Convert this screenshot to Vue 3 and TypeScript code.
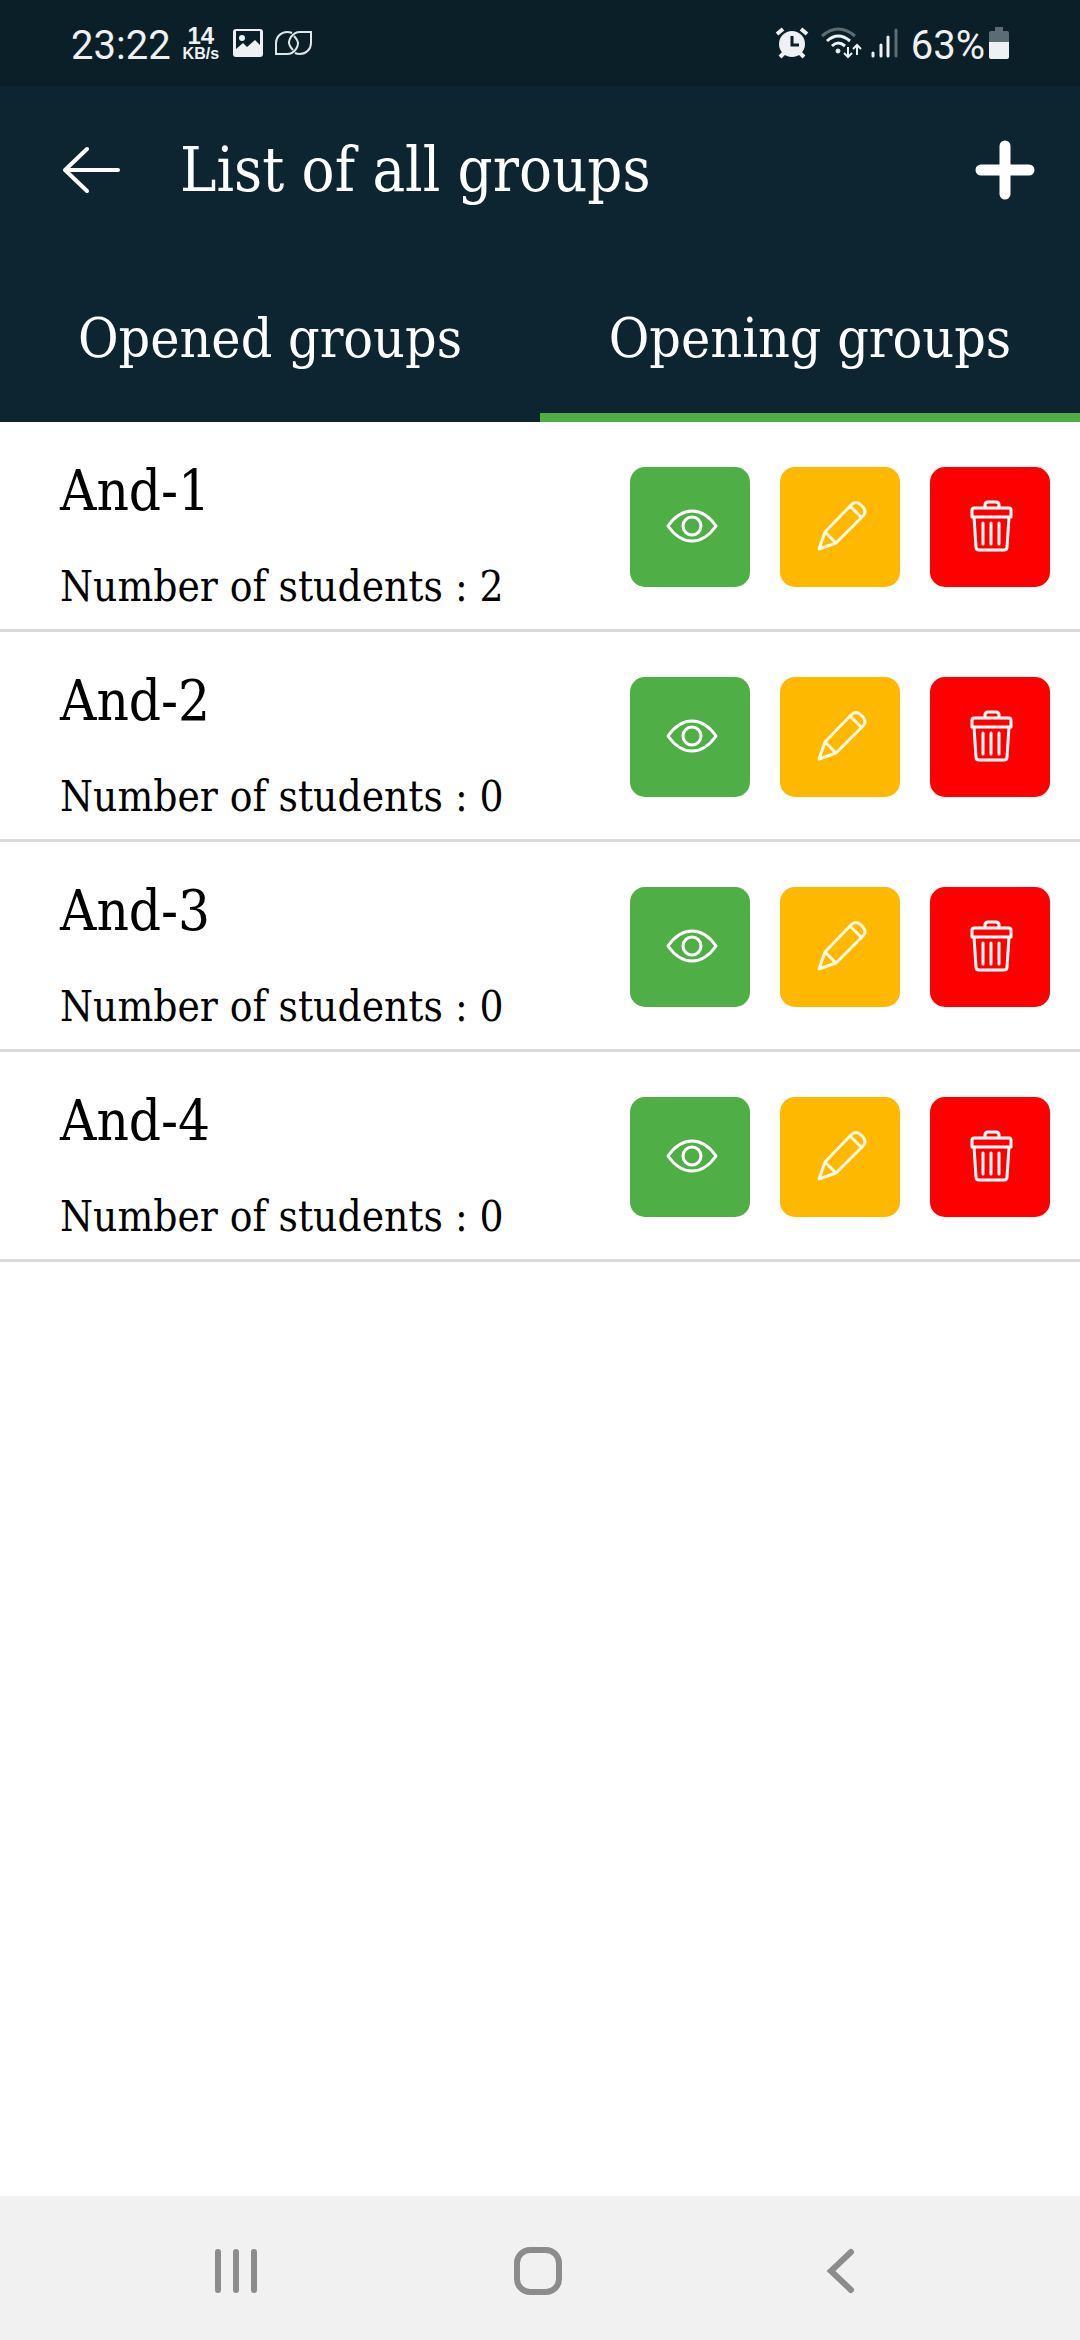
<script setup lang="ts">
import { ref } from 'vue'

interface Group {
  name: string
  students: number
}

const tabs = ['Opened groups', 'Opening groups']
const activeTab = ref(1)

const groups: Group[] = [
  { name: 'And-1', students: 2 },
  { name: 'And-2', students: 0 },
  { name: 'And-3', students: 0 },
  { name: 'And-4', students: 0 },
]
</script>

<template>
  <div class="screen">
    <div class="status">
      <div class="status-left">
        <span class="clock">23:22</span>
        <span class="speed"><b class="rate">14</b><b class="unit">KB/s</b></span>
        <svg class="picture" width="30" height="30" viewBox="0 0 30 30">
          <path
            fill="#eef1f3"
            fill-rule="evenodd"
            d="M3 1h24a3 3 0 0 1 3 3v22a3 3 0 0 1-3 3H3a3 3 0 0 1-3-3V4a3 3 0 0 1 3-3zM3 3v18l7-6 4 4 8-7 5 5V3z"
          />
          <circle cx="9" cy="10" r="3" fill="#eef1f3" />
        </svg>
        <svg width="37" height="24" viewBox="0 0 37 24" fill="none" stroke="#dfe5e8" stroke-width="2">
          <path d="M17 2Q15 1 12 1A11 11 0 0 0 1 12V23H12C20 23 25 14 22 9Q21 7 19 5" />
          <path d="M20 22Q22 23 25 23A11 11 0 0 0 36 12V1H25C17 1 12 10 15 15Q16 17 18 19" />
        </svg>
      </div>
      <div class="status-right">
        <svg width="34" height="32" viewBox="0 0 34 32">
          <circle cx="17" cy="17" r="13" fill="#eef1f3" />
          <path
            d="M2 7l6-5M32 7l-6-5M5 30l4-4M29 30l-4-4"
            stroke="#eef1f3"
            stroke-width="4"
          />
          <path d="M17 9v9h7" fill="none" stroke="#0a1f27" stroke-width="3" />
        </svg>
        <svg class="wifi" width="42" height="32" viewBox="0 0 42 32" fill="none" stroke="#eef1f3" stroke-width="3">
          <path d="M1 9Q17-5 34 9" stroke="#5d6c73" />
          <path d="M6 14Q17 4 29 14M11 19Q17 13 24 19" />
          <circle cx="17" cy="24" r="2" fill="#eef1f3" stroke-width="1" />
          <path d="M27 20v9M23 26l4 4 4-4M36 28v-9M32 22l4-4 4 4" stroke-width="2" />
        </svg>
        <svg class="signal" width="28" height="30" viewBox="0 0 28 30" stroke-width="3" stroke-linecap="round">
          <path d="M2 25v3M10 17v11M17 9v19" stroke="#eef1f3" />
          <path d="M25 2v26" stroke="#5d6c73" />
        </svg>
        <span class="clock">63%</span>
        <svg class="battery" width="20" height="32" viewBox="0 0 20 32">
          <path d="M6 0h8v4h4a2 2 0 0 1 2 2v9H0V6a2 2 0 0 1 2-2h4z" fill="#5d6c73" />
          <path d="M0 15h20v15a2 2 0 0 1-2 2H2a2 2 0 0 1-2-2z" fill="#eef1f3" />
        </svg>
      </div>
    </div>

    <header class="top">
      <div class="bar">
        <button class="plain" type="button" aria-label="Back">
          <svg width="60" height="60" viewBox="0 0 60 60" fill="none" stroke="#fff" stroke-width="4" stroke-linecap="round" stroke-linejoin="round">
            <path d="M58 30H6M27 9L5 30L27 51" />
          </svg>
        </button>
        <h1>List of all groups</h1>
        <button class="plain" type="button" aria-label="Add group">
          <svg width="60" height="60" viewBox="0 0 60 60" stroke="#fff" stroke-width="11" stroke-linecap="round">
            <path d="M30 6v48M6 30h48" />
          </svg>
        </button>
      </div>
      <nav class="tabs">
        <button
          v-for="(tab, i) in tabs"
          :key="tab"
          type="button"
          class="tab"
          :class="{ active: activeTab === i }"
          @click="activeTab = i"
        >
          {{ tab }}
        </button>
      </nav>
    </header>

    <main class="list">
      <section v-for="group in groups" :key="group.name" class="row">
        <div class="info">
          <h2>{{ group.name }}</h2>
          <p>Number of students : {{ group.students }}</p>
        </div>
        <div class="actions">
          <button class="action view" type="button" aria-label="View">
            <svg width="60" height="60" viewBox="0 0 60 60" fill="none" stroke="#fff" stroke-width="3" stroke-linejoin="round">
              <path d="M8 29C22 9 42 9 56 29C42 49 22 49 8 29Z" />
              <circle cx="32" cy="29" r="9" />
            </svg>
          </button>
          <button class="action edit" type="button" aria-label="Edit">
            <svg width="60" height="60" viewBox="0 0 60 60" fill="none" stroke="#fff9e6" stroke-width="3" stroke-linejoin="round">
              <path d="M9 52L15 35L41 8Q46 3 51 8L53 10Q57 15 53 19L26 46ZM15 35L26 46M40 9L51 20" />
            </svg>
          </button>
          <button class="action remove" type="button" aria-label="Delete">
            <svg width="60" height="60" viewBox="0 0 60 60" fill="none" stroke="#fff" stroke-width="3" stroke-linejoin="round" stroke-linecap="round">
              <path d="M14 11H49Q51 11 51 13V20H12V13Q12 11 14 11ZM25 11V8Q25 5 28 5H36Q39 5 39 8V11M14 20L16 50Q16 53 19 53H44Q47 53 47 50L49 20M23 26V47M31 26V47M39 26V47" />
            </svg>
          </button>
        </div>
      </section>
    </main>

    <footer class="navbar">
      <button class="plain" type="button" aria-label="Recent apps">
        <svg width="48" height="48" viewBox="0 0 48 48" stroke="#8c8c8c" stroke-width="6" stroke-linecap="round">
          <path d="M6 5v38M24 5v38M42 5v38" />
        </svg>
      </button>
      <button class="plain" type="button" aria-label="Home">
        <svg width="48" height="48" viewBox="0 0 48 48" fill="none" stroke="#8c8c8c" stroke-width="6">
          <rect x="3" y="3" width="42" height="42" rx="13" />
        </svg>
      </button>
      <button class="plain" type="button" aria-label="Go back">
        <svg width="48" height="48" viewBox="0 0 48 48" fill="none" stroke="#8c8c8c" stroke-width="6" stroke-linecap="round">
          <path d="M35 5L15 24L35 43" />
        </svg>
      </button>
    </footer>
  </div>
</template>

<style>
body {
  margin: 0;
  background: #fff;
}
</style>

<style scoped>
.screen {
  display: flex;
  flex-direction: column;
  min-height: 100vh;
  background: #fff;
  color: #000;
  font-family: 'Roboto Slab', 'DejaVu Serif Condensed', 'DejaVu Serif', serif;
}

svg {
  display: block;
  flex: none;
}

button {
  border: 0;
  padding: 0;
  color: inherit;
  font-family: inherit;
  cursor: pointer;
}

h1,
h2,
p {
  margin: 0;
  font-weight: 400;
}

.plain {
  background: none;
}

.status {
  display: flex;
  justify-content: space-between;
  align-items: center;
  height: 86px;
  padding: 0 71px;
  background: #0a1f27;
  color: #eef1f3;
  font-family: Roboto, sans-serif;
}

.status-left,
.status-right {
  display: flex;
  align-items: center;
}

.clock {
  font-size: 40px;
  line-height: 48px;
  padding-top: 5px;
}

.speed {
  display: flex;
  flex-direction: column;
  align-items: center;
  margin: 0 14px 0 12px;
  padding-top: 2px;
  font-family: 'Liberation Sans', sans-serif;
}

.rate {
  font-size: 24px;
  line-height: 20px;
}

.unit {
  font-size: 16px;
  line-height: 16px;
}

.picture {
  margin-right: 12px;
}

.wifi {
  margin: 0 8px 0 12px;
}

.signal {
  margin-right: 12px;
}

.battery {
  margin-left: 4px;
}

.top {
  background: #0c2530;
  color: #fff;
}

.bar {
  display: flex;
  align-items: center;
  height: 168px;
  padding: 0 45px 0 60px;
}

h1 {
  flex: 1;
  margin-left: 60px;
  font-size: 61px;
  line-height: 72px;
}

.tabs {
  display: flex;
  height: 168px;
}

.tab {
  flex: 1;
  border-top: 9px solid transparent;
  border-bottom: 9px solid transparent;
  background: none;
  font-size: 55px;
  line-height: 64px;
}

.active {
  border-bottom-color: #50ae47;
}

.list {
  flex: 1;
}

.row {
  display: flex;
  justify-content: space-between;
  padding: 37px 30px 18px 60px;
  border-bottom: 3px solid #dadada;
}

h2 {
  font-size: 56px;
  line-height: 64px;
}

p {
  margin-top: 40px;
  font-size: 42px;
  line-height: 48px;
}

.actions {
  display: flex;
  gap: 30px;
  padding-top: 8px;
}

.action {
  display: flex;
  align-items: center;
  justify-content: center;
  width: 120px;
  height: 120px;
  border-radius: 15px;
}

.view {
  background: #50ae47;
}

.edit {
  background: #ffb800;
}

.remove {
  background: #f00;
}

.navbar {
  display: flex;
  justify-content: space-around;
  align-items: center;
  height: 144px;
  padding: 6px 89px 0 85px;
  box-sizing: border-box;
  background: #f1f1f1;
}
</style>
